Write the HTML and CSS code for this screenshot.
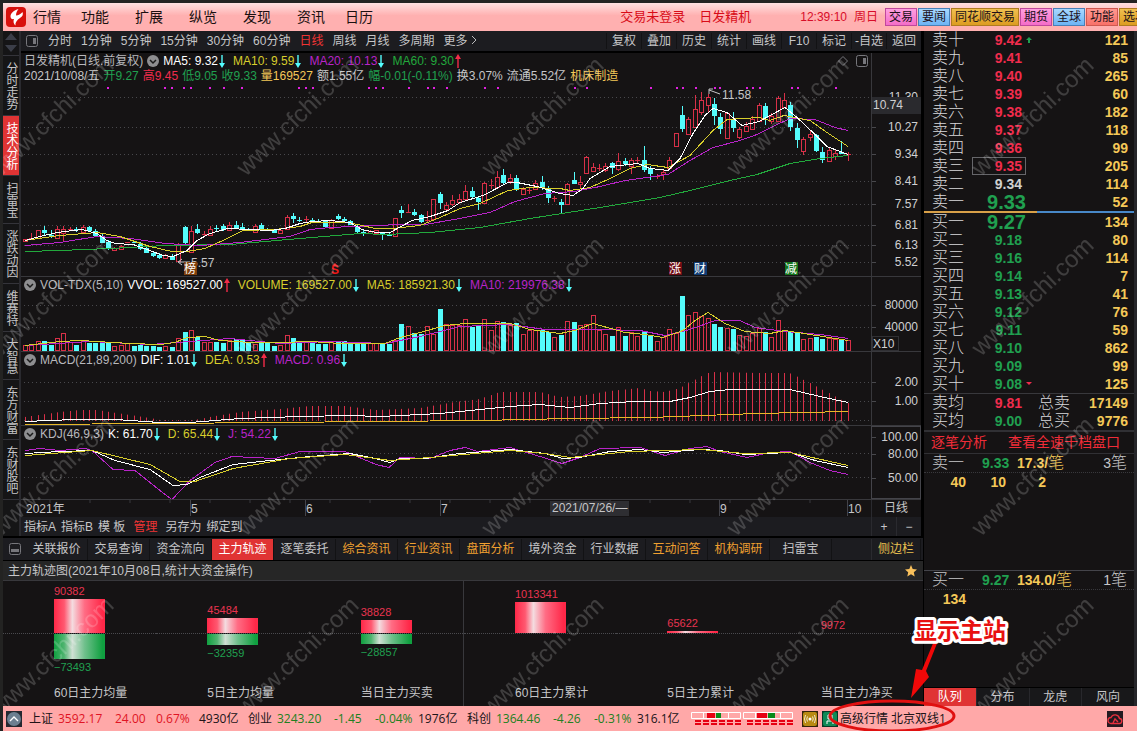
FILE: index.html
```html
<!DOCTYPE html>
<html lang="zh-CN">
<head>
    <meta charset="UTF-8">
    <meta name="viewport" content="width=device-width, initial-scale=1.0">
    <title>日发精机 - 技术分析</title>
    <link rel="stylesheet" href="styles.css">
</head>
<body>
    <svg class="defs" width="0" height="0" aria-hidden="true">
        <symbol id="down" viewBox="0 0 6 14"><path d="M3 1V12" stroke="#54fcfc" stroke-width="1.4"/><path d="M0 9H6L3 14Z" fill="#54fcfc"/></symbol>
        <symbol id="up" viewBox="0 0 6 14"><path d="M3 2V14" stroke="#f22c48" stroke-width="1.4"/><path d="M0 5H6L3 0Z" fill="#f22c48"/></symbol>
        <symbol id="fold" viewBox="0 0 12 12"><circle cx="6" cy="6" r="6" fill="#8e8e90"/><path d="M3 5L6 8L9 5" fill="none" stroke="#1a1a1a" stroke-width="1.5"/></symbol>
        <symbol id="meter" viewBox="0 0 50 13">
            <path d="M.5 .5H49.5V6.5H.5ZM12.5 .5V6.5M37.5 .5V6.5" fill="none" stroke="#fff"/>
            <path d="M4 9H50M4 12H50" stroke="#e60012" stroke-width="2" stroke-dasharray="6 2"/>
        </symbol>
    </svg>

    <header class="topbar">
        <svg class="logo" viewBox="0 0 20 20">
            <rect width="20" height="20" rx="4" fill="#d8100c"/>
            <path d="M12.500 2C8 3.500 4.500 6 4.500 9.500C4.500 11.500 6 12.500 8 12C7 14 7.500 17 9.500 18.500C9 15.500 11 13 14 11C16.500 9.500 17.500 7.500 16.500 5C14.500 7 12.500 8.500 10 8.500C10 6 11 4 12.500 2Z" fill="#fff"/>
        </svg>
        <nav class="menu">
            <button class="near">行情</button>
            <button>功能</button>
            <button>扩展</button>
            <button>纵览</button>
            <button>发现</button>
            <button class="near">资讯</button>
            <button>日历</button>
        </nav>
        <span class="login">交易未登录</span>
        <span class="stock">日发精机</span>
        <span class="clock">12:39:10</span>
        <span class="day">周日</span>
        <div class="quick">
            <button class="pink">交易</button>
            <button class="blue">要闻</button>
            <button class="gold">同花顺交易</button>
            <button class="pink">期货</button>
            <button class="blue">全球</button>
            <button class="rose">功能</button>
            <button class="gold">选项</button>
        </div>
    </header>

    <main class="workspace">
        <section class="left">
            <div class="upper">
                <nav class="side">
                    <div class="side-arrows">
                        <svg width="14" height="22" viewBox="0 0 14 22"><path d="M7 1L13 8H1ZM7 20L1 13H13Z" fill="#3b3e48"/></svg>
                    </div>
                    <button>分时走势</button>
                    <button class="active">技术分析</button>
                    <button>扫雷宝</button>
                    <button>涨跌动因</button>
                    <button>维赛特</button>
                    <button>大智慧</button>
                    <button>东方财富</button>
                    <button>东财股吧</button>
                </nav>

                <div class="chart">
                    <div class="periods">
                        <svg class="panel-icon" viewBox="0 0 12 12"><rect x=".5" y=".5" width="11" height="11" rx="2" fill="none" stroke="#77777c"/><rect x="7" y="3" width="3" height="6" fill="#77777c"/></svg>
                        <div class="period-list">
                            <button>分时</button>
                            <button>1分钟</button>
                            <button>5分钟</button>
                            <button>15分钟</button>
                            <button>30分钟</button>
                            <button>60分钟</button>
                            <button class="on">日线</button>
                            <button>周线</button>
                            <button>月线</button>
                            <button>多周期</button>
                            <button>更多 <svg width="6" height="10" viewBox="0 0 6 10"><path d="M1 1L5 5L1 9" fill="none" stroke="#b9b9bb"/></svg></button>
                        </div>
                        <div class="tools">
                            <button>复权</button>
                            <button>叠加</button>
                            <button>历史</button>
                            <button>统计</button>
                            <button>画线</button>
                            <button>F10</button>
                            <button>标记</button>
                            <button>-自选</button>
                            <button>返回</button>
                        </div>
                    </div>

                    <div class="pane price">
                        <div class="pane-head">
                            <div class="legend">
                                <span>日发精机(日线.前复权)</span>
                                <svg class="fold"><use href="#fold"/></svg>
                                <span class="white">MA5: 9.32<svg class="arrow"><use href="#down"/></svg></span>
                                <span class="yellow">MA10: 9.59<svg class="arrow"><use href="#down"/></svg></span>
                                <span class="purple">MA20: 10.13<svg class="arrow"><use href="#down"/></svg></span>
                                <span class="green">MA60: 9.30<svg class="arrow"><use href="#up"/></svg></span>
                                <svg class="corner" viewBox="0 0 30 12"><path d="M5 1.500L9.500 6L5 10.500L.5 6Z" fill="none" stroke="#77777c"/><rect x="18.500" y=".5" width="11" height="11" rx="2" fill="none" stroke="#77777c"/><rect x="25" y="3" width="3" height="6" fill="#77777c"/></svg>
                            </div>
                            <div class="quote">
                                <span>2021/10/08/五</span>
                                <span class="down">开9.27</span>
                                <span class="rise">高9.45</span>
                                <span class="down">低9.05</span>
                                <span class="down">收9.33</span>
                                <span class="amber">量169527</span>
                                <span>额1.55亿</span>
                                <span class="down">幅-0.01(-0.11%)</span>
                                <span>换3.07%</span>
                                <span>流通5.52亿</span>
                                <span class="amber">机床制造</span>
                            </div>
                        </div>
                        <svg class="plot" id="pricePlot"></svg>
                        <svg class="axis" id="priceAxis"></svg>
                    </div>

                    <div class="pane">
                        <div class="pane-head legend">
                            <svg class="fold"><use href="#fold"/></svg>
                            <span>VOL-TDX(5,10)</span>
                            <span class="white">VVOL: 169527.00<svg class="arrow"><use href="#up"/></svg></span>
                            <span class="yellow">VOLUME: 169527.00<svg class="arrow"><use href="#down"/></svg></span>
                            <span class="yellow">MA5: 185921.30<svg class="arrow"><use href="#down"/></svg></span>
                            <span class="purple">MA10: 219976.38<svg class="arrow"><use href="#down"/></svg></span>
                        </div>
                        <svg class="plot" id="volPlot"></svg>
                        <svg class="axis" id="volAxis"></svg>
                    </div>

                    <div class="pane short">
                        <div class="pane-head legend">
                            <svg class="fold"><use href="#fold"/></svg>
                            <span>MACD(21,89,200)</span>
                            <span class="white">DIF: 1.01<svg class="arrow"><use href="#down"/></svg></span>
                            <span class="yellow">DEA: 0.53<svg class="arrow"><use href="#up"/></svg></span>
                            <span class="purple">MACD: 0.96<svg class="arrow"><use href="#down"/></svg></span>
                        </div>
                        <svg class="plot" id="macdPlot"></svg>
                        <svg class="axis" id="macdAxis"></svg>
                    </div>

                    <div class="pane short">
                        <div class="pane-head legend">
                            <svg class="fold"><use href="#fold"/></svg>
                            <span>KDJ(46,9,3)</span>
                            <span class="white">K: 61.70<svg class="arrow"><use href="#down"/></svg></span>
                            <span class="yellow">D: 65.44<svg class="arrow"><use href="#down"/></svg></span>
                            <span class="purple">J: 54.22<svg class="arrow"><use href="#down"/></svg></span>
                        </div>
                        <svg class="plot" id="kdjPlot"></svg>
                        <svg class="axis boxed" id="kdjAxis"></svg>
                    </div>

                    <div class="dates">
                        <svg id="dateAxis"></svg>
                        <span>日线</span>
                    </div>

                    <div class="indicators">
                        <button>指标A</button>
                        <button>指标B</button>
                        <button>模 板</button>
                        <button class="on">管理</button>
                        <button>另存为</button>
                        <button>绑定到</button>
                        <div class="zoomer">
                            <button>+</button>
                            <button>−</button>
                        </div>
                    </div>
                </div>
            </div>

            <nav class="tabs">
                <svg class="panel-icon" viewBox="0 0 12 12"><rect x=".5" y=".5" width="11" height="11" rx="2" fill="none" stroke="#77777c"/><rect x="2" y="6" width="8" height="3" fill="#77777c"/></svg>
                <button>关联报价</button>
                <button>交易查询</button>
                <button>资金流向</button>
                <button class="active">主力轨迹</button>
                <button>逐笔委托</button>
                <button class="orange">综合资讯</button>
                <button class="orange">行业资讯</button>
                <button class="orange">盘面分析</button>
                <button>境外资金</button>
                <button>行业数据</button>
                <button class="orange">互动问答</button>
                <button class="orange">机构调研</button>
                <button>扫雷宝</button>
                <button class="sidebar-btn">侧边栏</button>
            </nav>

            <div class="flow-title">
                <span>主力轨迹图(2021年10月08日,统计大资金操作)</span>
                <svg width="12" height="12" viewBox="0 0 12 12"><path d="M6 0L7.700 4L12 4.400L8.800 7.300L9.700 11.600L6 9.300L2.300 11.600L3.200 7.300L0 4.400L4.300 4Z" fill="#f9c15c"/></svg>
            </div>
            <div class="flows" id="flows"></div>
        </section>

        <aside class="right">
            <table class="book sell">
                <tbody id="sellRows"></tbody>
            </table>
            <div class="ratio"><i></i><b></b></div>
            <table class="book buy">
                <tbody id="buyRows"></tbody>
            </table>
            <table class="book totals">
                <tbody>
                    <tr><th>卖均</th><td class="px rise">9.81</td><td class="sum">总卖</td><td class="qty">17149</td></tr>
                    <tr><th>买均</th><td class="px down">9.00</td><td class="sum">总买</td><td class="qty">9776</td></tr>
                </tbody>
            </table>
            <div class="links">
                <a href="#">逐笔分析</a>
                <a href="#">查看全速千档盘口</a>
            </div>
            <div class="queue">
                <div class="queue-head"><span>卖一</span><b class="down">9.33</b><b class="amber">17.3/<i>笔</i></b><em>3<i>笔</i></em></div>
                <div class="queue-list"><b>40</b><b>10</b><b>2</b></div>
            </div>
            <div class="queue second">
                <div class="queue-head"><span>买一</span><b class="down">9.27</b><b class="amber">134.0/<i>笔</i></b><em>1<i>笔</i></em></div>
                <div class="queue-list"><b>134</b></div>
            </div>
            <nav class="right-tabs">
                <button class="active">队列</button>
                <button>分布</button>
                <button>龙虎</button>
                <button>风向</button>
            </nav>
        </aside>

        <svg class="watermark" aria-hidden="true">
            <defs>
                <pattern id="mark" x="-13" y="18" width="245" height="180" patternUnits="userSpaceOnUse">
                    <text transform="translate(11 128) rotate(-44)">www.cfchi.com</text>
                </pattern>
            </defs>
            <rect width="100%" height="100%" fill="url(#mark)"/>
        </svg>
    </main>

    <footer class="status">
        <svg class="st-icon" viewBox="0 0 16 16"><rect width="16" height="16" fill="#252830"/><circle cx="8" cy="8" r="7" fill="#6c7f90"/><path d="M4 10L8 6L12 10" fill="none" stroke="#fff" stroke-width="1.300"/></svg>
        <div class="index rise"><span>上证</span><i>3592.17</i><i>24.00</i><i>0.67%</i><span>4930亿</span></div>
        <div class="index fall"><span>创业</span><i>3243.20</i><i>-1.45</i><i>-0.04%</i><span>1976亿</span></div>
        <div class="index fall"><span>科创</span><i>1364.46</i><i>-4.26</i><i>-0.31%</i><span>316.1亿</span></div>
        <div class="meters">
            <svg width="50" height="13"><use href="#meter"/><rect x="16" y="1" width="8" height="5" fill="#e60012"/><rect x="25" y="1" width="5" height="5" fill="#0a8a1a"/></svg>
            <svg width="50" height="13"><use href="#meter"/><rect x="14" y="1" width="10" height="5" fill="#e60012"/><rect x="25" y="1" width="7" height="5" fill="#0a8a1a"/></svg>
        </div>
        <svg class="st-icon" viewBox="0 0 16 16"><rect width="16" height="16" fill="#33230a"/><rect x="1" y="1" width="14" height="14" rx="2" fill="#b98a12"/><circle cx="8" cy="8" r="1.500" fill="#fff"/><path d="M5.500 5.500Q4 8 5.500 10.500M10.500 5.500Q12 8 10.500 10.500M3.500 4Q1.500 8 3.500 12M12.500 4Q14.500 8 12.500 12" fill="none" stroke="#fff" stroke-width=".8"/></svg>
        <svg class="st-icon" viewBox="0 0 16 16"><rect width="16" height="16" fill="#063a26"/><rect x="1" y="1" width="14" height="14" rx="2" fill="#108a56"/><path d="M5 13V10H11V13M6 4H10V8H6Z" fill="none" stroke="#fff"/></svg>
        <span class="server">高级行情 北京双线1</span>
        <svg class="st-icon cloud" viewBox="0 0 16 16"><rect width="16" height="16" fill="#231a20"/><path d="M4 12.500H12A2.500 2.500 0 0 0 12.500 7.500A4.500 4.500 0 0 0 4 6.500A3 3 0 0 0 4 12.500Z" fill="none" stroke="#e8303e" stroke-width="1.400"/><path d="M6 12L8 8L11 11" fill="none" stroke="#e8303e" stroke-width="1.400"/></svg>
    </footer>

    <svg class="callout" width="190" height="120" viewBox="0 0 190 120">
        <ellipse cx="66" cy="105" rx="62" ry="15" fill="none" stroke="#e01010" stroke-width="3"/>
        <path d="M112 30L100 60L103 66L85 87L90 58L96 59L108 30Z" fill="#f00808"/>
        <text x="88" y="28">显示主站</text>
    </svg>

    <script src="script.js"></script>
</body>
</html>
```
FILE: styles.css
```css
* {
    box-sizing: border-box;
}
body {
    margin: 0;
    padding: 3px 0 0 3px;
    min-height: 100vh;
    display: flex;
    flex-direction: column;
    position: relative;
    overflow-x: hidden;
    background: #232322;
    color: #c6c6c8;
    font-family: "Liberation Sans", "Noto Sans CJK SC", sans-serif;
    font-size: 12px;
    line-height: 16px;
}
button {
    margin: 0;
    padding: 0;
    border: 0;
    background: none;
    color: inherit;
    font: inherit;
    white-space: nowrap;
    cursor: pointer;
}
a {
    text-decoration: none;
}
i, em {
    font-style: normal;
}
svg {
    display: block;
    flex: none;
}
.defs {
    position: absolute;
}

/* colours shared by quotes and legends */
.white { color: #fff; }
.yellow { color: #d8ce2c; }
.purple { color: #b824c8; }
.green { color: #22a83c; }
.amber { color: #f4c858; }
.rise { color: #f02c4c; }
.down { color: #20a050; }

/* top bar */
.topbar {
    display: flex;
    align-items: center;
    height: 28px;
    flex: none;
    padding-left: 3px;
    background: linear-gradient(#ffe0e0, #ffb0b0 45%, #ffb0b0);
    color: #1a1010;
}
.logo {
    width: 20px;
    height: 20px;
}
.menu {
    display: flex;
    flex: 1;
    padding-left: 7px;
    font-size: 14px;
}
.menu button {
    margin-right: 26px;
}
.menu .near {
    margin-right: 20px;
}
.login, .stock {
    margin-right: 14px;
    color: #d80c18;
    font-size: 13px;
}
.stock {
    margin-right: 49px;
}
.clock, .day {
    margin-right: 7px;
    color: #d80c28;
}
.quick {
    display: flex;
    gap: 1px;
    width: 252px;
    overflow: hidden;
}
.quick button {
    height: 18px;
    padding: 0 3px;
    border: 1px solid;
    color: #201018;
}
.quick .pink { background: linear-gradient(#ff9fe0, #f46cc8); border-color: #c0489c; }
.quick .blue { background: linear-gradient(#a8d8ff, #6cb4f4); border-color: #4880b8; }
.quick .gold { background: linear-gradient(#f0c050, #dc9c20); border-color: #b07c20; }
.quick .rose { background: linear-gradient(#ff9890, #f87068); border-color: #d05850; }

/* frame */
.workspace {
    display: flex;
    flex: 1;
    position: relative;
    background: #151314;
}
.left {
    display: flex;
    flex: 1;
    flex-direction: column;
    min-width: 0;
}
.upper {
    display: flex;
    border-bottom: 2px solid #000;
}
.side {
    width: 18px;
    border-right: 2px solid #2a2a2f;
    background: #151516;
}
.side-arrows {
    height: 25px;
    padding: 1px;
    border-bottom: 1px solid #34343a;
}
.side button {
    display: block;
    width: 16px;
    padding: 6px 0 5px;
    border-bottom: 1px solid #34343a;
    line-height: 16px;
    writing-mode: vertical-rl;
    text-orientation: upright;
}
.side .active {
    background: #e03434;
    color: #fff;
}
.chart {
    flex: 1;
    min-width: 0;
    border-right: 2px solid #000;
}
.periods {
    display: flex;
    align-items: center;
    height: 22px;
    padding-left: 5px;
    border-bottom: 2px solid #000;
    background: #1c1c20;
}
.panel-icon {
    width: 12px;
    height: 12px;
}
.period-list {
    display: flex;
    flex: 1;
    gap: 9px;
    padding-left: 10px;
}
.period-list svg {
    display: inline-block;
}
.periods .on, .indicators .on {
    color: #f03434;
}
.tools {
    display: flex;
}
.tools button {
    width: 35px;
    border-left: 1px solid #121214;
}
.pane {
    display: grid;
    grid-template-columns: minmax(0, 1fr) 50px;
    grid-template-rows: 16px 58px;
    border-bottom: 1px solid #38383c;
}
.pane.price {
    grid-template-rows: 32px 191px;
}
.pane.short {
    grid-template-rows: 16px 57px;
}
.pane-head {
    white-space: nowrap;
    color: #b8b8bc;
}
.legend {
    display: flex;
    align-items: center;
    gap: 4px;
    padding-left: 3px;
    height: 16px;
}
.legend span {
    display: flex;
    align-items: center;
}
.legend .arrow {
    margin: 0 4px 0 1px;
}
.quote {
    display: flex;
    gap: 4px;
    height: 14px;
    line-height: 14px;
    padding-left: 3px;
    color: #c6c6c8;
}
.arrow {
    width: 6px;
    height: 14px;
}
.fold {
    width: 12px;
    height: 12px;
}
.corner {
    width: 30px;
    height: 12px;
    margin-left: auto;
    margin-right: 3px;
}
.plot {
    grid-column: 1;
    width: 100%;
    height: 100%;
}
.plot polyline {
    shape-rendering: crispEdges;
}
.axis {
    grid-column: 2;
    grid-row: 1 / 3;
    width: 50px;
    height: 100%;
    border-left: 1px solid #38383c;
}
.boxed {
    border: 1px solid #44444a;
}
.dates {
    display: flex;
    height: 17px;
}
.dates svg {
    flex: 1;
    width: 0;
    height: 17px;
}
.dates span {
    width: 50px;
    padding-left: 12px;
    border-left: 1px solid #2a2a2f;
}
.indicators {
    display: flex;
    gap: 5px;
    height: 19px;
    line-height: 18px;
    padding-left: 3px;
    background: #1c1c20;
}
.indicators .on {
    margin: 0 3px;
}
.zoomer {
    display: flex;
    margin-left: auto;
}
.zoomer button {
    width: 25px;
    border-left: 1px solid #2a2a2f;
}

/* lower tabs and money flow */
.tabs {
    display: flex;
    align-items: center;
    height: 23px;
    padding: 0 2px 0 6px;
    border-bottom: 1px solid #000;
    background: #1c1c20;
}
.tabs .panel-icon {
    margin-right: 5px;
}
.tabs button {
    width: 62px;
    height: 21px;
    border-right: 1px solid #121214;
}
.tabs .active {
    background: #e03434;
    color: #fff;
}
.tabs .orange {
    color: #f0a030;
}
.tabs .sidebar-btn {
    width: 50px;
    margin-left: auto;
    border-left: 1px solid #2a2a2f;
    color: #e8c050;
}
.flow-title {
    display: flex;
    justify-content: space-between;
    align-items: center;
    height: 20px;
    padding: 0 6px 0 5px;
    border-bottom: 1px solid #38383c;
    background: #262626;
}
.flows {
    display: grid;
    grid-template-columns: repeat(6, 1fr);
    flex: 1;
}
.flow {
    display: grid;
    grid-template-rows: 53px 1fr 28px;
    font-size: 11px;
    line-height: 15px;
}
.flow:nth-child(4) {
    border-left: 1px solid #38383c;
}
.flow div {
    padding-left: 51px;
}
.flow .in {
    display: flex;
    flex-direction: column;
    justify-content: flex-end;
    border-bottom: 1px dotted #4a4a4e;
    color: #e83450;
}
.flow .out {
    color: #20a050;
}
.flow .caption {
    font-size: 12px;
    line-height: 30px;
}
.bar {
    display: block;
    width: 51px;
    flex: none;
}
.in .bar {
    background: linear-gradient(90deg, #ff2848, #ff5870 20%, #f4dce0 36%, #ff6c84 60%, #ff2848 95%);
}
.out .bar {
    margin-bottom: 1px;
    background: linear-gradient(90deg, #10a040, #50b470 20%, #d0e0d4 36%, #70c08c 60%, #10a040 95%);
}

/* order book */
.right {
    display: flex;
    flex-direction: column;
    width: 214px;
    border-left: 1px solid #000;
    border-right: 3px solid #26262a;
    font-size: 14px;
}
.book {
    width: 100%;
    border-collapse: collapse;
    table-layout: fixed;
}
.book tr {
    height: 18px;
}
.book td, .book th {
    padding: 0;
    line-height: 18px;
    white-space: nowrap;
}
.book th {
    width: 48px;
    padding-left: 8px;
    text-align: left;
    font-size: 16px;
    font-weight: 300;
    color: #d8d8da;
}
.book .px {
    width: 54px;
    padding-right: 4px;
    text-align: right;
    font-weight: bold;
}
.book .flag {
    width: 10px;
}
.book .qty {
    padding-right: 6px;
    text-align: right;
    font-weight: bold;
    color: #f4c858;
}
.book .picked {
    outline: 1px solid #66666a;
    outline-offset: -1px;
}
.book .big {
    padding-right: 0;
    font-size: 20px;
}
.book .flat {
    color: #d0d0d0;
}
.ratio {
    display: flex;
    flex: none;
    height: 2px;
}
.ratio i {
    flex: 54;
    background: #d8a048;
}
.ratio b {
    flex: 46;
    background: #4888c8;
}
.totals {
    border-top: 1px solid #38383c;
    border-bottom: 2px solid #303034;
}
.totals .sum {
    width: 43px;
    padding-left: 12px;
    font-size: 16px;
    font-weight: 300;
    color: #d8d8da;
}
.links {
    display: flex;
    gap: 21px;
    padding-left: 7px;
    height: 22px;
    line-height: 20px;
    border-bottom: 1px solid #303034;
}
.links a {
    color: #f02c38;
}
.queue {
    flex: 1;
}
.queue.second {
    border-top: 1px solid #44444a;
}
.queue b {
    font-weight: bold;
}
.queue-head {
    display: grid;
    grid-template-columns: 50px 35px 70px 1fr;
    height: 19px;
    padding: 0 7px 0 8px;
    line-height: 18px;
    border-bottom: 1px dotted #38383c;
}
.queue-head span, .queue-head i {
    font-size: 16px;
    font-weight: 300;
}
.queue-head em {
    text-align: right;
}
.queue-list {
    display: grid;
    grid-template-columns: repeat(3, 40px);
    padding-left: 2px;
    line-height: 19px;
    text-align: right;
    color: #f4c858;
}
.right-tabs {
    display: grid;
    grid-template-columns: repeat(4, 1fr);
    gap: 1px;
    height: 19px;
    border-top: 1px solid #000;
    background: #28282c;
    font-size: 12px;
}
.right-tabs button {
    background: #18181a;
}
.right-tabs .active {
    background: #e03434;
    color: #fff;
}
.watermark {
    position: absolute;
    inset: 0;
    width: 100%;
    height: 100%;
    pointer-events: none;
}
.watermark text {
    font-size: 24px;
    fill: rgba(255, 255, 255, 0.18);
}

/* status bar */
.status {
    display: flex;
    align-items: center;
    height: 25px;
    flex: none;
    padding: 0 14px 0 3px;
    background: #ffa8a8;
    color: #201418;
    font-family: "Open Sans", "Noto Sans CJK SC", sans-serif;
    white-space: nowrap;
}
.st-icon {
    width: 16px;
    height: 16px;
}
.st-icon + .index {
    margin-left: 7px;
}
.index {
    display: grid;
    grid-template-columns: 29px 57px 41px 43px 49px;
}
.index span {
    color: #201418;
}
.index.rise i {
    color: #e01424;
}
.index.fall i {
    color: #208020;
}
.meters {
    display: flex;
    gap: 2px;
    margin-left: 5px;
    margin-right: 9px;
}
.st-icon + .st-icon {
    margin-left: 4px;
}
.server {
    margin-left: 2px;
}
.cloud {
    margin-left: auto;
}
.callout {
    position: absolute;
    right: 121px;
    bottom: 0;
    pointer-events: none;
}
.callout text {
    font-family: "Liberation Serif", "Noto Sans CJK SC", serif;
    font-size: 23px;
    font-weight: bold;
    fill: #e81010;
    stroke: #fff;
    stroke-width: 6px;
    stroke-linejoin: round;
    paint-order: stroke;
}
```
FILE: script.js
```javascript
const NS = 'http://www.w3.org/2000/svg';
const RED = '#d83048', CYAN = '#54fcfc';
const WHITE = '#ffffff', YELLOW = '#d8ce2c', PURPLE = '#b824c8', GREEN = '#22a83c';

// direction, high, body top, body bottom, low
const candles = `r239 239 241 241,r233 238 239 239,r230 230 238 238,c226 230 233 235,c230 235 237 238,r226 229 238 239,r226 229 233 241,r227 229 230 231,c227 229 230 232,r225 227 232 232,
c226 227 231 232,c229 231 236 237,c233 236 243 243,c240 242 249 250,r247 248 250 251,r245 246 249 249,r242 242 243 243,c241 242 243 243,c242 244 249 250,c245 248 253 253,
c251 253 256 257,c253 255 258 259,r254 255 258 258,c254 256 260 260,r243 244 261 261,c226 227 243 245,r226 231 252 253,c224 229 233 234,r231 234 234 237,r226 229 235 236,
c225 228 229 232,c224 226 230 231,r222 225 230 231,c221 225 228 229,c223 227 229 231,c228 229 231 231,r224 226 232 232,c223 225 229 230,c228 229 230 231,c229 230 233 233,
r229 230 233 234,r215 217 229 230,c213 216 219 223,c217 220 221 222,r216 219 220 222,c218 220 222 222,c219 221 222 223,c220 221 227 228,r219 220 228 229,c214 216 219 220,
c217 219 221 222,c220 221 225 225,c224 226 232 233,c230 232 233 236,r230 231 233 234,r230 230 233 234,c232 232 234 240,c232 235 236 236,r218 218 236 236,c206 210 213 218,
r204 212 213 213,c209 212 215 216,c214 215 222 223,r211 220 221 223,r199 199 219 220,c192 194 203 209,r202 205 209 209,r195 200 204 206,r194 199 202 204,r185 191 199 199,
c187 191 197 198,c196 198 202 210,r182 183 203 203,r179 185 186 189,r171 177 187 187,c169 175 183 184,r174 178 181 184,c175 178 190 191,r187 189 194 194,r187 190 191 194,
r180 183 189 190,c176 182 188 190,c186 189 198 203,r196 198 199 202,c199 202 205 213,r183 184 204 204,c172 180 184 184,r176 182 184 188,r156 157 173 173,r163 167 171 172,
r164 168 169 171,r163 166 170 172,c162 163 168 174,r153 161 169 171,c158 161 164 166,r158 160 166 174,r157 160 161 163,c146 160 170 172,c166 168 174 180,r174 176 177 179,
r170 172 174 180,r157 160 168 170,r133 133 146 146,c106 115 129 132,r117 119 134 135,r95 109 127 128,r92 100 112 115,r94 97 105 112,c98 104 116 125,c113 117 129 134,
r112 113 138 139,c112 120 128 132,r127 129 137 139,r122 126 131 132,r116 119 129 130,r103 105 121 122,c103 106 118 125,r113 116 121 124,r96 98 121 121,r93 100 107 108,
c102 105 127 131,c123 128 140 148,r137 139 151 155,r130 134 137 141,c134 135 151 152,c147 152 160 163,r148 150 161 161,r149 153 156 160,c141 152 154 154,r152 154 155 161`
    .split(',').map(s => { s = s.trim(); return [s[0], ...s.slice(1).split(' ').map(Number)]; });

const volumes = [345,344,341,341,345,338,333,342,345,340,343,343,343,343,346,345,343,346,345,346,346,347,346,347,338,332,330,337,342,342,
    342,343,340,339,340,342,344,342,343,346,345,335,338,342,341,342,344,344,341,341,341,342,343,343,343,343,343,344,340,324,
    326,333,334,326,334,309,324,325,325,319,327,325,319,330,321,322,325,323,334,330,330,330,332,337,335,321,322,325,324,315,
    330,334,336,327,336,332,336,332,336,341,337,329,333,296,315,312,316,318,324,327,328,329,335,336,333,328,332,337,320,330,
    332,333,339,338,337,339,338,339,340,340];

const marks = [107,164,171,183,190,209,223,241,298,305,312,368,375,382,408,427,433,446,484,497,574,586,650,676,682,695,714,719,746,752,759,791,797,835];

const lines = {
    ma5: '25,240 40,236 57,232 82,229 97,233 107,240 115,243 133,244 150,250 163,255 173,256 187,250 197,240 210,233 228,228 270,230 285,228 300,223 312,221 330,220 350,222 362,229 376,232 390,232 412,220 430,216 448,210 460,202 483,195 508,182 517,182 537,186 560,193 573,195 583,188 590,178 610,166 638,163 650,168 668,170 680,158 693,133 705,115 713,108 727,112 742,125 759,121 770,115 785,107 797,117 814,133 827,146 848,154',
    ma10: '25,240 60,235 97,232 120,236 150,246 172,251 187,251 205,248 225,239 243,230 275,229 300,226 312,222 348,222 362,225 375,228 393,228 420,225 440,217 460,208 480,203 508,190 530,187 560,188 570,190 590,187 610,178 630,168 647,164 668,167 690,155 713,130 727,119 759,117 770,120 784,115 810,120 827,132 848,146',
    ma20: '25,245 60,242 97,236 130,238 165,243 200,245 240,242 290,236 310,229 330,227 376,225 400,224 425,224 460,218 490,212 515,201 545,193 575,191 600,186 625,180 640,178 668,174 690,160 713,147 740,140 757,134 775,125 790,118 815,119 835,127 848,130',
    ma60: '25,251 60,250 110,248 165,245 230,244 300,238 360,233 385,234 430,232 480,227 530,218 600,207 660,197 690,190 730,180 757,174 790,163 820,158 848,155',
    v5: '25,345 60,341 80,340 130,343 160,344 175,342 187,337 205,336 220,340 250,342 280,342 310,341 340,343 385,343 400,337 420,332 445,325 465,323 510,323 530,329 560,333 575,330 593,323 625,332 645,334 663,337 683,330 695,320 708,312 725,323 745,331 770,333 785,330 810,334 848,340',
    v10: '25,345 90,341 150,344 190,341 230,338 280,343 330,341 385,343 420,336 460,326 510,324 545,329 600,329 640,330 665,335 690,329 715,320 740,320 755,327 785,331 820,334 848,338',
    hist: '25,417 60,412 80,410 97,410 110,412 150,418 160,420 195,420 210,417 240,412 280,409 310,406 345,406 376,410 400,409 420,408 455,402 480,399 500,392 540,392 560,397 580,396 610,391 640,388 650,391 665,392 680,388 700,377 710,372 760,373 790,373 810,383 848,403',
    dif: '25,421 75,419 115,419 160,422 190,422 240,418 300,416 350,415 380,416 440,413 480,409 510,406 540,404 570,407 600,403 635,401 670,401 690,397 710,391 730,389 790,389 820,396 848,402',
    dea: '25,424 160,423 380,421 480,420 570,418 650,417 730,414 757,413 848,411',
    k: '25,453 60,451 92,450 115,460 150,469 173,485 187,484 200,477 233,464 270,460 310,456 350,453 375,458 390,462 400,458 425,458 460,453 510,449 545,453 563,458 580,457 610,451 640,449 663,452 700,449 720,450 745,454 790,452 815,460 848,467',
    d: '25,455 92,450 150,464 180,481 195,481 233,468 290,458 345,454 376,458 390,460 430,457 510,450 545,453 570,457 630,451 700,449 745,453 790,452 848,465',
    j: '25,450 40,448 60,450 85,448 92,450 113,469 135,470 160,490 172,499 190,480 215,462 232,456 275,458 300,451 345,451 376,464 389,467 400,457 430,458 450,450 465,447 478,451 510,447 540,456 562,463 580,457 600,448 640,447 665,455 690,448 707,446 720,451 747,457 770,452 790,451 810,462 830,470 848,474'
};

function add(svg, tag, attrs, text) {
    const el = document.createElementNS(NS, tag);
    for (const key in attrs) el.setAttribute(key, attrs[key]);
    if (text) el.textContent = text;
    svg.appendChild(el);
    return el;
}

// a plot keeps its own top edge and stretches x with the window
function plot(id, top) {
    const svg = document.getElementById(id);
    svg.innerHTML = '';
    const scale = svg.getBoundingClientRect().width / 850;
    const x = v => (v - 21) * scale;
    const y = v => v - top;
    return {
        svg, x, y,
        grid(values) {
            values.forEach(v => add(svg, 'path', { d: `M3 ${y(v) + 0.5}H${x(871)}`, stroke: '#48484c', 'stroke-dasharray': '1 3' }));
        },
        line(points, color) {
            const p = points.split(' ').map(s => { const [a, b] = s.split(','); return x(+a) + ',' + (y(+b) + 0.5); });
            add(svg, 'polyline', { points: p.join(' '), fill: 'none', stroke: color, 'stroke-width': 1 });
        },
        text(px, py, value, color) {
            add(svg, 'text', { x: x(px), y: y(py), fill: color || '#c6c6c8', 'font-size': 12 }, value);
        }
    };
}

const cx = i => 25.6 + i * 6.378;

function levelAt(points, px) {
    const p = points.split(' ').map(s => s.split(',').map(Number));
    for (let i = 1; i < p.length; i++) {
        if (px <= p[i][0]) {
            const t = (px - p[i - 1][0]) / (p[i][0] - p[i - 1][0]);
            return p[i - 1][1] + t * (p[i][1] - p[i - 1][1]);
        }
    }
    return p[p.length - 1][1];
}

function drawPrice() {
    const p = plot('pricePlot', 85);
    p.grid([97, 127, 154, 181, 204, 225, 245, 262]);
    marks.forEach(m => add(p.svg, 'rect', { x: Math.round(p.x(m)), y: p.y(87), width: 2, height: 2, fill: '#e020e0' }));
    candles.forEach(([dir, high, top, bottom, low], i) => {
        const c = Math.floor(p.x(cx(i))) + 0.5;
        const h = Math.max(bottom - top, 1);
        const color = dir === 'r' ? RED : CYAN;
        add(p.svg, 'path', { d: `M${c} ${p.y(high)}V${p.y(top)}M${c} ${p.y(bottom)}V${p.y(low)}`, stroke: color });
        if (dir === 'r' && h > 1) {
            add(p.svg, 'rect', { x: c - 2, y: p.y(top) + 0.5, width: 4, height: h, fill: 'none', stroke: color });
        } else {
            add(p.svg, 'rect', { x: c - 2.5, y: p.y(top), width: 5, height: h, fill: color });
        }
    });
    p.line(lines.ma60, GREEN);
    p.line(lines.ma20, PURPLE);
    p.line(lines.ma10, YELLOW);
    p.line(lines.ma5, WHITE);
    p.text(722, 99, '11.58');
    add(p.svg, 'path', { d: `M${p.x(720)} ${p.y(94)}L${p.x(709)} ${p.y(90)}M${p.x(713)} ${p.y(89)}H${p.x(709)}V${p.y(94)}`, fill: 'none', stroke: '#c6c6c8' });
    p.text(191, 267, '5.57');
    add(p.svg, 'path', { d: `M${p.x(190)} ${p.y(262)}H${p.x(178)}M${p.x(182)} ${p.y(259)}L${p.x(178)} ${p.y(262)}L${p.x(182)} ${p.y(265)}`, fill: 'none', stroke: '#c6c6c8' });
    [[184, '榜', '#80400c'], [669, '涨', '#700c14'], [694, '财', '#103c74'], [785, '减', '#14741c']].forEach(([bx, t, color]) => {
        add(p.svg, 'rect', { x: p.x(bx), y: p.y(262), width: 13, height: 13, fill: color });
        p.text(bx, 273, t, '#fff');
    });
    add(p.svg, 'text', { x: p.x(331), y: p.y(274), fill: '#f01818', 'font-size': 12, 'font-weight': 'bold' }, 'S');
    add(p.svg, 'path', { d: `M${p.x(335)} ${p.y(263)}l3 3h-6z`, fill: '#f01818' });
}

function drawVolume() {
    const p = plot('volPlot', 293);
    p.grid([305, 327]);
    volumes.forEach((top, i) => {
        const c = Math.floor(p.x(cx(i))) + 0.5;
        const red = candles[i][0] === 'r';
        add(p.svg, 'rect', {
            x: red ? c - 2 : c - 2.5, y: p.y(top) + (red ? 0.5 : 0), width: red ? 4 : 5, height: 351 - top - (red ? 1 : 0),
            fill: red ? 'none' : CYAN, stroke: red ? RED : 'none'
        });
    });
    p.line(lines.v10, PURPLE);
    p.line(lines.v5, YELLOW);
}

function drawMacd() {
    const p = plot('macdPlot', 368);
    p.grid([382, 401, 420]);
    candles.forEach((c, i) => {
        const x = Math.floor(p.x(cx(i))) + 0.5;
        add(p.svg, 'path', { d: `M${x} ${p.y(421)}V${p.y(levelAt(lines.hist, cx(i)))}`, stroke: RED });
    });
    p.line(lines.dif, WHITE);
    p.line(lines.dea, '#e8b828');
}

function drawKdj() {
    const p = plot('kdjPlot', 442);
    p.grid([453, 477]);
    p.line(lines.j, PURPLE);
    p.line(lines.k, WHITE);
    p.line(lines.d, YELLOW);
}

function drawDates() {
    const p = plot('dateAxis', 500);
    for (let m = 50; m < 850; m += 40) add(p.svg, 'path', { d: `M${p.x(m)} 0V3`, stroke: '#38383c' });
    [[190, '5'], [305, '6'], [440, '7'], [719, '9'], [847, '10']].forEach(([x, t]) => {
        add(p.svg, 'path', { d: `M${Math.floor(p.x(x)) + 0.5} 0V16`, stroke: '#44444a' });
        p.text(x + 1, 513, t);
    });
    p.text(26, 513, '2021年');
    add(p.svg, 'rect', { x: p.x(550), y: 1, width: 79, height: 15, fill: '#2e2e32' });
    p.text(552, 512, '2021/07/26/—');
}

function drawAxis(id, top, labels) {
    const svg = document.getElementById(id);
    labels.forEach(([y, t]) => {
        add(svg, 'path', { d: `M0 ${y - top + 0.5}H4`, stroke: '#48484c' });
        add(svg, 'text', { x: 46, y: y - top + 4, fill: '#d0d0d2', 'font-size': 12, 'text-anchor': 'end' }, t);
    });
    return svg;
}

function drawAll() {
    drawPrice();
    drawVolume();
    drawMacd();
    drawKdj();
    drawDates();
}

const priceAxis = drawAxis('priceAxis', 53, [[97, '11.30'], [127, '10.27'], [154, '9.34'], [181, '8.41'], [204, '7.57'], [225, '6.81'], [245, '6.13'], [262, '5.52']]);
add(priceAxis, 'rect', { x: 0, y: 44, width: 50, height: 17, fill: '#2a2a2e' });
add(priceAxis, 'text', { x: 1, y: 56, fill: '#d0d0d2', 'font-size': 12 }, '10.74');
const volAxis = drawAxis('volAxis', 277, [[305, '80000'], [327, '40000']]);
add(volAxis, 'rect', { x: 0.5, y: 59.5, width: 26, height: 14, fill: 'none', stroke: '#303034' });
add(volAxis, 'text', { x: 1, y: 71, fill: '#d0d0d2', 'font-size': 12 }, 'X10');
drawAxis('macdAxis', 352, [[382, '2.00'], [401, '1.00']]);
drawAxis('kdjAxis', 427, [[437, '100.00'], [454, '80.00'], [478, '50.00']]);
drawAll();
window.addEventListener('resize', drawAll);

// order book
const sell = [['十', 9.42, 121], ['九', 9.41, 85], ['八', 9.40, 265], ['七', 9.39, 60], ['六', 9.38, 182], ['五', 9.37, 118], ['四', 9.36, 99], ['三', 9.35, 205], ['二', 9.34, 114], ['一', 9.33, 52]];
const buy = [['一', 9.27, 134], ['二', 9.18, 80], ['三', 9.16, 114], ['四', 9.14, 7], ['五', 9.13, 41], ['六', 9.12, 76], ['七', 9.11, 59], ['八', 9.10, 862], ['九', 9.09, 99], ['十', 9.08, 125]];
const upFlag = '<svg width="6" height="6" viewBox="0 0 6 6"><path d="M3 0L6 3H4V6H2V3H0Z" fill="#20a050"/></svg>';
const downFlag = '<svg width="6" height="4" viewBox="0 0 6 4"><path d="M0 0H6L3 3Z" fill="#f02c4c"/></svg>';

function bookRows(side, rows) {
    return rows.map(([level, price, qty]) => {
        let cls = price > 9.34 ? 'rise' : price === 9.34 ? 'flat' : 'down';
        if (level === '一') cls += ' big';
        if (price === 9.35) cls += ' picked';
        const flag = price === 9.42 ? upFlag : price === 9.08 ? downFlag : '';
        return `<tr><th>${side}${level}</th><td class="px ${cls}">${price.toFixed(2)}</td><td class="flag">${flag}</td><td class="qty">${qty}</td></tr>`;
    }).join('');
}
document.getElementById('sellRows').innerHTML = bookRows('卖', sell);
document.getElementById('buyRows').innerHTML = bookRows('买', buy);

// money flow: caption, in, bar height, out, bar height
const flows = [
    ['60日主力均量', '90382', 34, '−73493', 25],
    ['5日主力均量', '45484', 15, '−32359', 11],
    ['当日主力买卖', '38828', 13, '−28857', 10],
    ['60日主力累计', '1013341', 31, '', 0],
    ['5日主力累计', '65622', 2, '', 0],
    ['当日主力净买', '9972', 0, '', 0]
];
document.getElementById('flows').innerHTML = flows.map(([name, inn, h1, out, h2]) => `
    <div class="flow">
        <div class="in">${inn}<span class="bar" style="height:${h1}px"></span></div>
        <div class="out"><span class="bar" style="height:${h2}px"></span>${out}</div>
        <div class="caption">${name}</div>
    </div>`).join('');
```
